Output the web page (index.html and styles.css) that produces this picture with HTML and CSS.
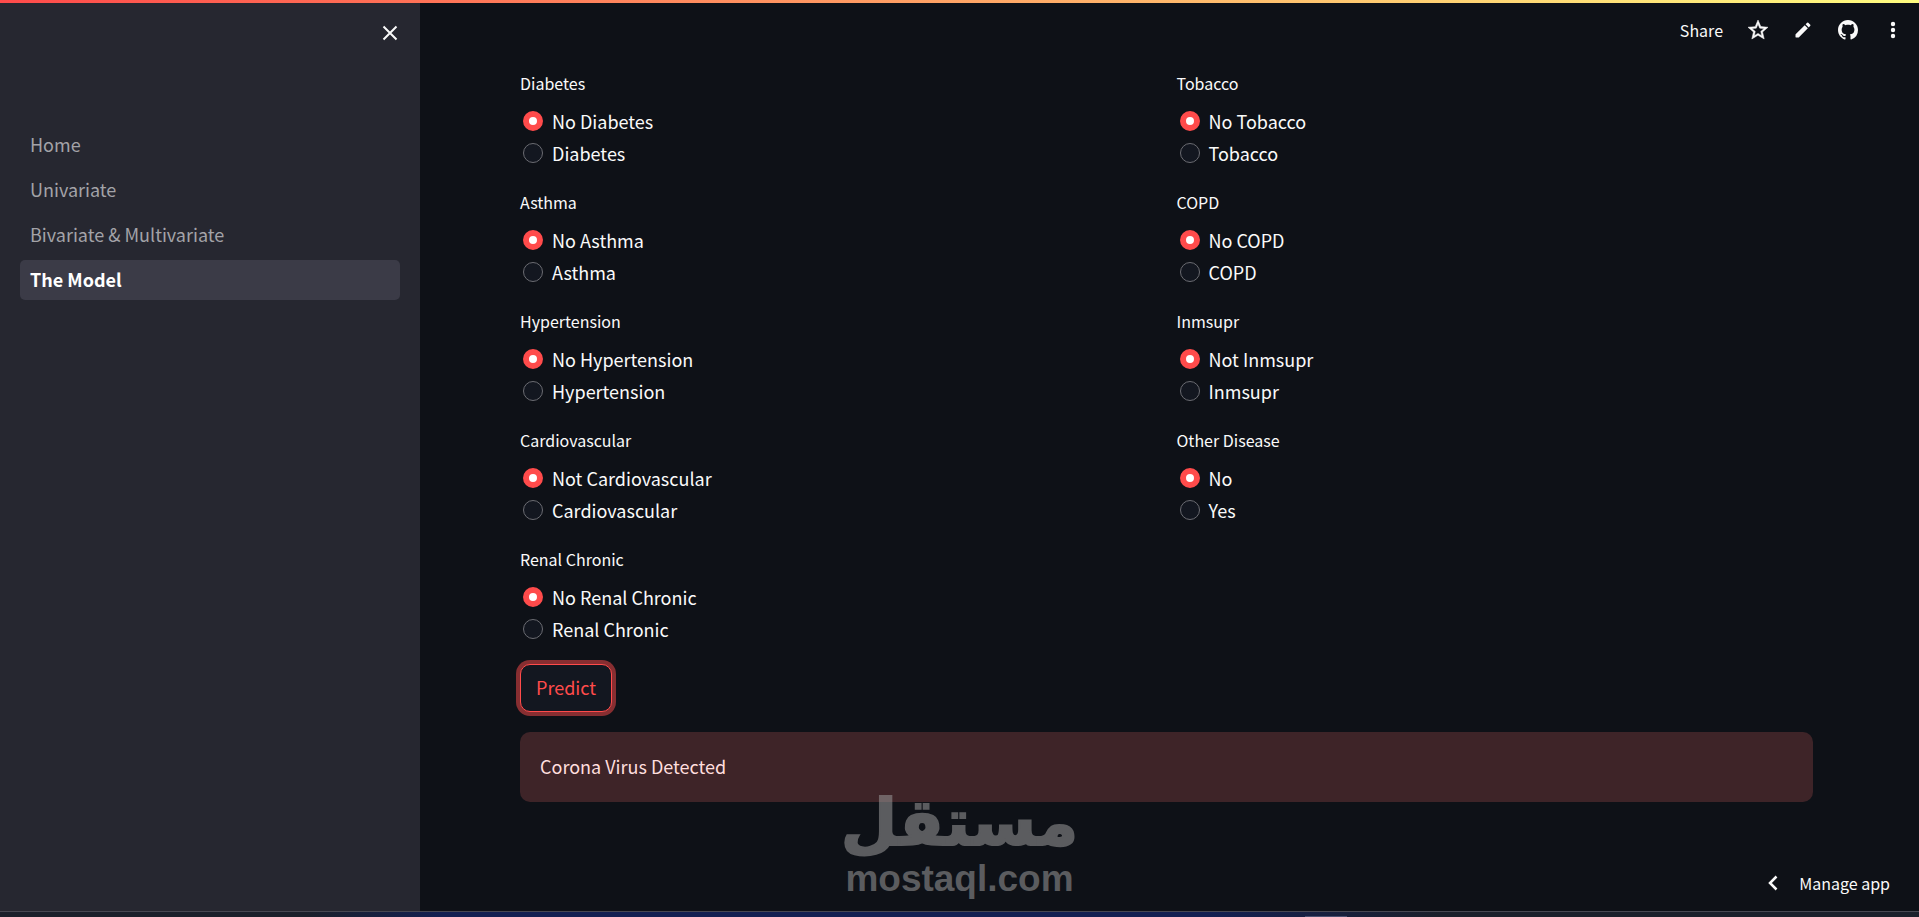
FILE: index.html
```html
<!DOCTYPE html>
<html lang="en">
<head>
  <meta charset="utf-8">
  <title>The Model</title>
  <link rel="stylesheet" href="styles.css">
</head>
<body>
  <div class="decoration"></div>

  <div class="app">
    <aside class="sidebar">
      <button class="icon-button close" aria-label="Close sidebar">
        <svg width="16" height="16" viewBox="0 0 16 16"><path d="M1.5 1.5l13 13M14.5 1.5l-13 13" fill="none" stroke="currentColor" stroke-width="2"/></svg>
      </button>
      <nav class="nav">
        <a class="nav-link" href="#">Home</a>
        <a class="nav-link" href="#">Univariate</a>
        <a class="nav-link" href="#">Bivariate &amp; Multivariate</a>
        <a class="nav-link active" href="#">The Model</a>
      </nav>
    </aside>

    <main class="main">
      <header class="toolbar">
        <button class="share">Share</button>
        <button class="icon-button" aria-label="Favorite">
          <svg width="22" height="22" viewBox="1 1 22 22" fill="currentColor"><path d="M22 9.24l-7.19-.62L12 2 9.19 8.63 2 9.24l5.46 4.73L5.82 21 12 17.27 18.18 21l-1.63-7.03L22 9.24zM12 15.4l-3.76 2.27 1-4.28-3.32-2.88 4.38-.38L12 6.1l1.71 4.04 4.38.38-3.32 2.88 1 4.28L12 15.4z" stroke="currentColor" stroke-width=".5"/></svg>
        </button>
        <button class="icon-button" aria-label="Edit">
          <svg width="20" height="20" viewBox="0 0 24 24" fill="currentColor"><path d="M3 17.46v3.04c0 .28.22.5.5.5h3.04c.13 0 .26-.05.35-.15L17.81 9.94l-3.75-3.75L3.15 17.1c-.1.1-.15.22-.15.36zM20.71 7.04a.996.996 0 000-1.41l-2.34-2.34a.996.996 0 00-1.41 0l-1.83 1.83 3.75 3.75 1.83-1.83z"/></svg>
        </button>
        <button class="icon-button" aria-label="View source on GitHub">
          <svg width="20" height="20" viewBox="0 0 16 16" fill="currentColor"><path d="M8 0C3.58 0 0 3.58 0 8c0 3.54 2.29 6.53 5.47 7.59.4.07.55-.17.55-.38 0-.19-.01-.82-.01-1.49-2.01.37-2.53-.49-2.69-.94-.09-.23-.48-.94-.82-1.13-.28-.15-.68-.52-.01-.53.63-.01 1.08.58 1.23.82.72 1.21 1.87.87 2.33.66.07-.52.28-.87.51-1.07-1.78-.2-3.64-.89-3.64-3.95 0-.87.31-1.59.82-2.15-.08-.2-.36-1.02.08-2.12 0 0 .67-.21 2.2.82.64-.18 1.32-.27 2-.27s1.36.09 2 .27c1.53-1.04 2.2-.82 2.2-.82.44 1.1.16 1.92.08 2.12.51.56.82 1.27.82 2.15 0 3.07-1.87 3.75-3.65 3.95.29.25.54.73.54 1.48 0 1.07-.01 1.93-.01 2.2 0 .21.15.46.55.38A8.01 8.01 0 0016 8c0-4.42-3.58-8-8-8z"/></svg>
        </button>
        <button class="icon-button" aria-label="Main menu">
          <svg width="20" height="20" viewBox="0 0 20 20" fill="currentColor"><circle cx="10" cy="4" r="2.2"/><circle cx="10" cy="10" r="2.2"/><circle cx="10" cy="16" r="2.2"/></svg>
        </button>
      </header>

      <form class="content">
        <div class="columns">
          <div class="column">
            <fieldset class="radio-group">
              <legend>Diabetes</legend>
              <label class="option"><input type="radio" name="diabetes" checked>No Diabetes</label>
              <label class="option"><input type="radio" name="diabetes">Diabetes</label>
            </fieldset>
            <fieldset class="radio-group">
              <legend>Asthma</legend>
              <label class="option"><input type="radio" name="asthma" checked>No Asthma</label>
              <label class="option"><input type="radio" name="asthma">Asthma</label>
            </fieldset>
            <fieldset class="radio-group">
              <legend>Hypertension</legend>
              <label class="option"><input type="radio" name="hypertension" checked>No Hypertension</label>
              <label class="option"><input type="radio" name="hypertension">Hypertension</label>
            </fieldset>
            <fieldset class="radio-group">
              <legend>Cardiovascular</legend>
              <label class="option"><input type="radio" name="cardiovascular" checked>Not Cardiovascular</label>
              <label class="option"><input type="radio" name="cardiovascular">Cardiovascular</label>
            </fieldset>
            <fieldset class="radio-group">
              <legend>Renal Chronic</legend>
              <label class="option"><input type="radio" name="renal" checked>No Renal Chronic</label>
              <label class="option"><input type="radio" name="renal">Renal Chronic</label>
            </fieldset>
          </div>

          <div class="column">
            <fieldset class="radio-group">
              <legend>Tobacco</legend>
              <label class="option"><input type="radio" name="tobacco" checked>No Tobacco</label>
              <label class="option"><input type="radio" name="tobacco">Tobacco</label>
            </fieldset>
            <fieldset class="radio-group">
              <legend>COPD</legend>
              <label class="option"><input type="radio" name="copd" checked>No COPD</label>
              <label class="option"><input type="radio" name="copd">COPD</label>
            </fieldset>
            <fieldset class="radio-group">
              <legend>Inmsupr</legend>
              <label class="option"><input type="radio" name="inmsupr" checked>Not Inmsupr</label>
              <label class="option"><input type="radio" name="inmsupr">Inmsupr</label>
            </fieldset>
            <fieldset class="radio-group">
              <legend>Other Disease</legend>
              <label class="option"><input type="radio" name="other" checked>No</label>
              <label class="option"><input type="radio" name="other">Yes</label>
            </fieldset>
          </div>
        </div>

        <button type="button" class="predict">Predict</button>
        <div class="alert" role="alert">Corona Virus Detected</div>
      </form>

      <button class="manage">
        <svg width="10" height="16" viewBox="0 0 10 16"><path d="M8.5 1.5L2 8l6.5 6.5" fill="none" stroke="currentColor" stroke-width="2.5"/></svg>
        Manage app
      </button>
    </main>
  </div>

  <div class="taskbar"><span class="taskbar-item"></span></div>

  <div class="watermark">
    <span class="watermark-ar" lang="ar" dir="rtl">مستقل</span>
    <span class="watermark-en">mostaql.com</span>
  </div>
</body>
</html>
```

FILE: styles.css
```css
* {
  box-sizing: border-box;
  margin: 0;
  padding: 0;
}

body {
  display: flex;
  flex-direction: column;
  position: relative;
  min-height: 100vh;
  background-color: #0e1117;
  color: #fafafa;
  font-family: "Noto Sans CJK SC", "Noto Sans", sans-serif;
  font-size: 18px;
  line-height: 32px;
}

button {
  border: none;
  background: none;
  color: inherit;
  font: inherit;
  cursor: pointer;
}

svg {
  display: block;
}

.decoration {
  height: 3px;
  background-image: linear-gradient(90deg, #ff4b4b, #fffd80);
}

.app {
  display: flex;
  flex: 1;
}

/* sidebar */
.sidebar {
  flex: none;
  width: 420px;
  padding: 18px 20px;
  background-color: #262730;
}

.icon-button {
  display: flex;
  justify-content: center;
  align-items: center;
  width: 24px;
  height: 24px;
}

.close {
  width: 20px;
  margin-left: auto;
}

.nav {
  display: flex;
  flex-direction: column;
  gap: 5px;
  margin-top: 80px;
}

.nav-link {
  padding: 3px 10px 5px;
  border-radius: 5px;
  color: #a3a3a8;
  text-decoration: none;
}

.nav-link.active {
  background-color: #3b3b47;
  color: #fff;
  font-weight: 700;
}

/* main */
.main {
  display: flex;
  flex-direction: column;
  flex: 1;
}

.toolbar {
  display: flex;
  justify-content: flex-end;
  align-items: center;
  gap: 21px;
  height: 54px;
  padding-right: 14px;
}

.share {
  margin-right: 2px;
  font-size: 16px;
}

.content {
  padding: 14px 106px 0 100px;
}

.columns {
  display: flex;
  gap: 20px;
}

.column {
  display: flex;
  flex-direction: column;
  flex: 1;
  gap: 21px;
}

.radio-group {
  border: none;
}

.radio-group legend {
  margin-bottom: 10px;
  font-size: 16px;
  line-height: 24px;
}

.option {
  display: flex;
  align-items: center;
  gap: 9px;
  padding-left: 3px;
}

.option input {
  appearance: none;
  width: 20px;
  height: 20px;
  border: 1px solid #6b6c72;
  border-radius: 50%;
  background-color: #131720;
}

.option input:checked {
  border: 6px solid #ff4b4b;
  background-color: #fff;
}

.predict {
  display: block;
  height: 48px;
  margin-top: 19px;
  padding: 0 15px 2px;
  border: 1px solid #ff4b4b;
  border-radius: 10px;
  background-color: #131720;
  box-shadow: 0 0 0 4px rgba(255, 75, 75, 0.5);
  color: #ff4b4b;
}

.alert {
  margin-top: 20px;
  padding: 18px 20px 20px;
  border-radius: 10px;
  background-color: #3e2428;
  color: #ffdede;
}

.manage {
  display: flex;
  align-items: center;
  gap: 21px;
  margin: auto 29px 12px auto;
  font-size: 16px;
}

.taskbar {
  height: 6px;
  border-top: 1px solid #474852;
  background-image: linear-gradient(90deg, #1b202b 16%, #132052 23%, #132052 63%, #1b202b 75%);
}

.taskbar-item {
  display: block;
  width: 42px;
  height: 1px;
  margin: 4px 0 0 68%;
  background-color: #4a5070;
}

/* stamp laid over the page */
.watermark {
  position: absolute;
  bottom: 20px;
  left: 50%;
  display: flex;
  flex-direction: column;
  align-items: center;
  color: #9a9a9a;
  font-weight: 700;
  opacity: 0.55;
  transform: translateX(-50%);
  pointer-events: none;
}

.watermark-ar {
  font-family: "DejaVu Sans", sans-serif;
  font-size: 65px;
  line-height: 76px;
  -webkit-text-stroke: 2px #9a9a9a;
}

.watermark-en {
  font-family: "Liberation Sans", sans-serif;
  font-size: 37px;
  line-height: 36px;
}
```
